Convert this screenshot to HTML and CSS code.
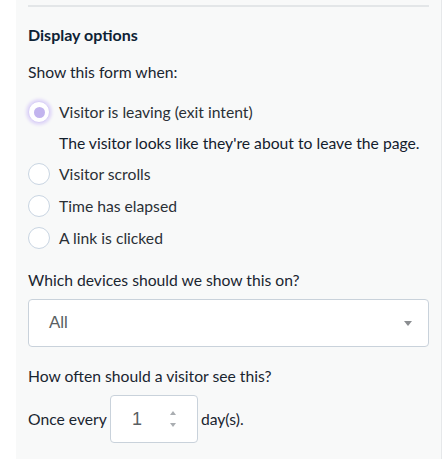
FILE: index.html
```html
<!DOCTYPE html>
<html>
<head>
<meta charset="utf-8">
<link rel="stylesheet" href="styles.css">
</head>
<body>
<div class="panel">
  <div class="rule"></div>
  <h2 class="heading">Display options</h2>
  <div class="label">Show this form when:</div>
  <div class="radios">
    <div class="radio-row">
      <span class="radio checked"><span class="dot"></span></span>
      <span class="radio-label">Visitor is leaving (exit intent)</span>
    </div>
    <div class="desc">The visitor looks like they're about to leave the page.</div>
    <div class="radio-row">
      <span class="radio"></span>
      <span class="radio-label">Visitor scrolls</span>
    </div>
    <div class="radio-row">
      <span class="radio"></span>
      <span class="radio-label">Time has elapsed</span>
    </div>
    <div class="radio-row">
      <span class="radio"></span>
      <span class="radio-label">A link is clicked</span>
    </div>
  </div>
  <div class="label devices">Which devices should we show this on?</div>
  <div class="select">
    <span class="select-value">All</span>
    <span class="caret"></span>
  </div>
  <div class="label often">How often should a visitor see this?</div>
  <div class="freq">
    <span class="freq-text">Once every</span>
    <div class="number">
      <span class="num-value">1</span>
      <span class="spin"><span class="up"></span><span class="down"></span></span>
    </div>
    <span class="freq-text">day(s).</span>
  </div>
</div>
</body>
</html>
```
FILE: styles.css
```css
html, body {
  margin: 0;
  padding: 0;
  background: #ffffff;
}
body {
  font-family: Lato, "Open Sans", sans-serif;
  color: #1a2530;
}
.panel {
  margin-left: 16px;
  width: 413px;
  height: 459px;
  padding-left: 12px;
  background: #f8f9f9;
  border-right: 1px solid #e6e8ea;
  box-sizing: content-box;
  overflow: hidden;
}
.rule {
  width: 401px;
  height: 0;
  border-top: 2px solid #e3e6e8;
  margin-top: 5px;
}
.heading {
  margin: 18px 0 0;
  font-size: 16px;
  line-height: 20px;
  font-weight: 700;
  color: #0e2235;
}
.label {
  margin-top: 17px;
  font-size: 15.7px;
  line-height: 20px;
  color: #1a2530;
}
.radios {
  margin-top: 14px;
}
.radio-row {
  display: flex;
  align-items: center;
  height: 32px;
}
.radio {
  width: 20px;
  height: 20px;
  border: 1px solid #c9d5e2;
  border-radius: 50%;
  background: #ffffff;
  display: flex;
  align-items: center;
  justify-content: center;
  flex: none;
}
.radio.checked {
  border-color: #d9d0f6;
  box-shadow: 0 0 3px 2px #e1d9f8;
}
.dot {
  width: 11px;
  height: 11px;
  border-radius: 50%;
  background: #c2b4ee;
}
.radio-label {
  margin-left: 9px;
  font-size: 15.7px;
  color: #2a3036;
}
.desc {
  margin-left: 31px;
  height: 30px;
  line-height: 30px;
  font-size: 15.7px;
  color: #13202d;
}
.devices {
  margin-top: 16px;
}
.select {
  margin-top: 9px;
  width: 401px;
  height: 48px;
  box-sizing: border-box;
  border: 1px solid #c9d2db;
  border-radius: 4px;
  background: #ffffff;
  display: flex;
  align-items: center;
  padding: 0 16px 0 20px;
}
.select-value {
  flex: 1;
  font-family: "Liberation Sans", Arial, sans-serif;
  font-size: 17px;
  color: #5a5f63;
}
.caret {
  width: 0;
  height: 0;
  border-left: 4.5px solid transparent;
  border-right: 4.5px solid transparent;
  border-top: 5px solid #8a8d90;
}
.often {
  margin-top: 19px;
}
.freq {
  margin-top: 9px;
  display: flex;
  align-items: center;
  gap: 3px;
}
.freq-text {
  font-size: 15.7px;
  color: #1a2530;
}
.number {
  width: 88px;
  height: 48px;
  box-sizing: border-box;
  border: 1px solid #c9d2db;
  border-radius: 4px;
  background: #ffffff;
  display: flex;
  align-items: center;
  padding-left: 21px;
}
.num-value {
  flex: 1;
  font-family: "Liberation Sans", Arial, sans-serif;
  font-size: 18px;
  color: #5a5f63;
}
.spin {
  display: flex;
  flex-direction: column;
  gap: 8px;
  margin-right: 21px;
}
.up, .down {
  width: 0;
  height: 0;
  border-left: 3.5px solid transparent;
  border-right: 3.5px solid transparent;
}
.up {
  border-bottom: 4px solid #a9adb1;
}
.down {
  border-top: 4px solid #a9adb1;
}
```
